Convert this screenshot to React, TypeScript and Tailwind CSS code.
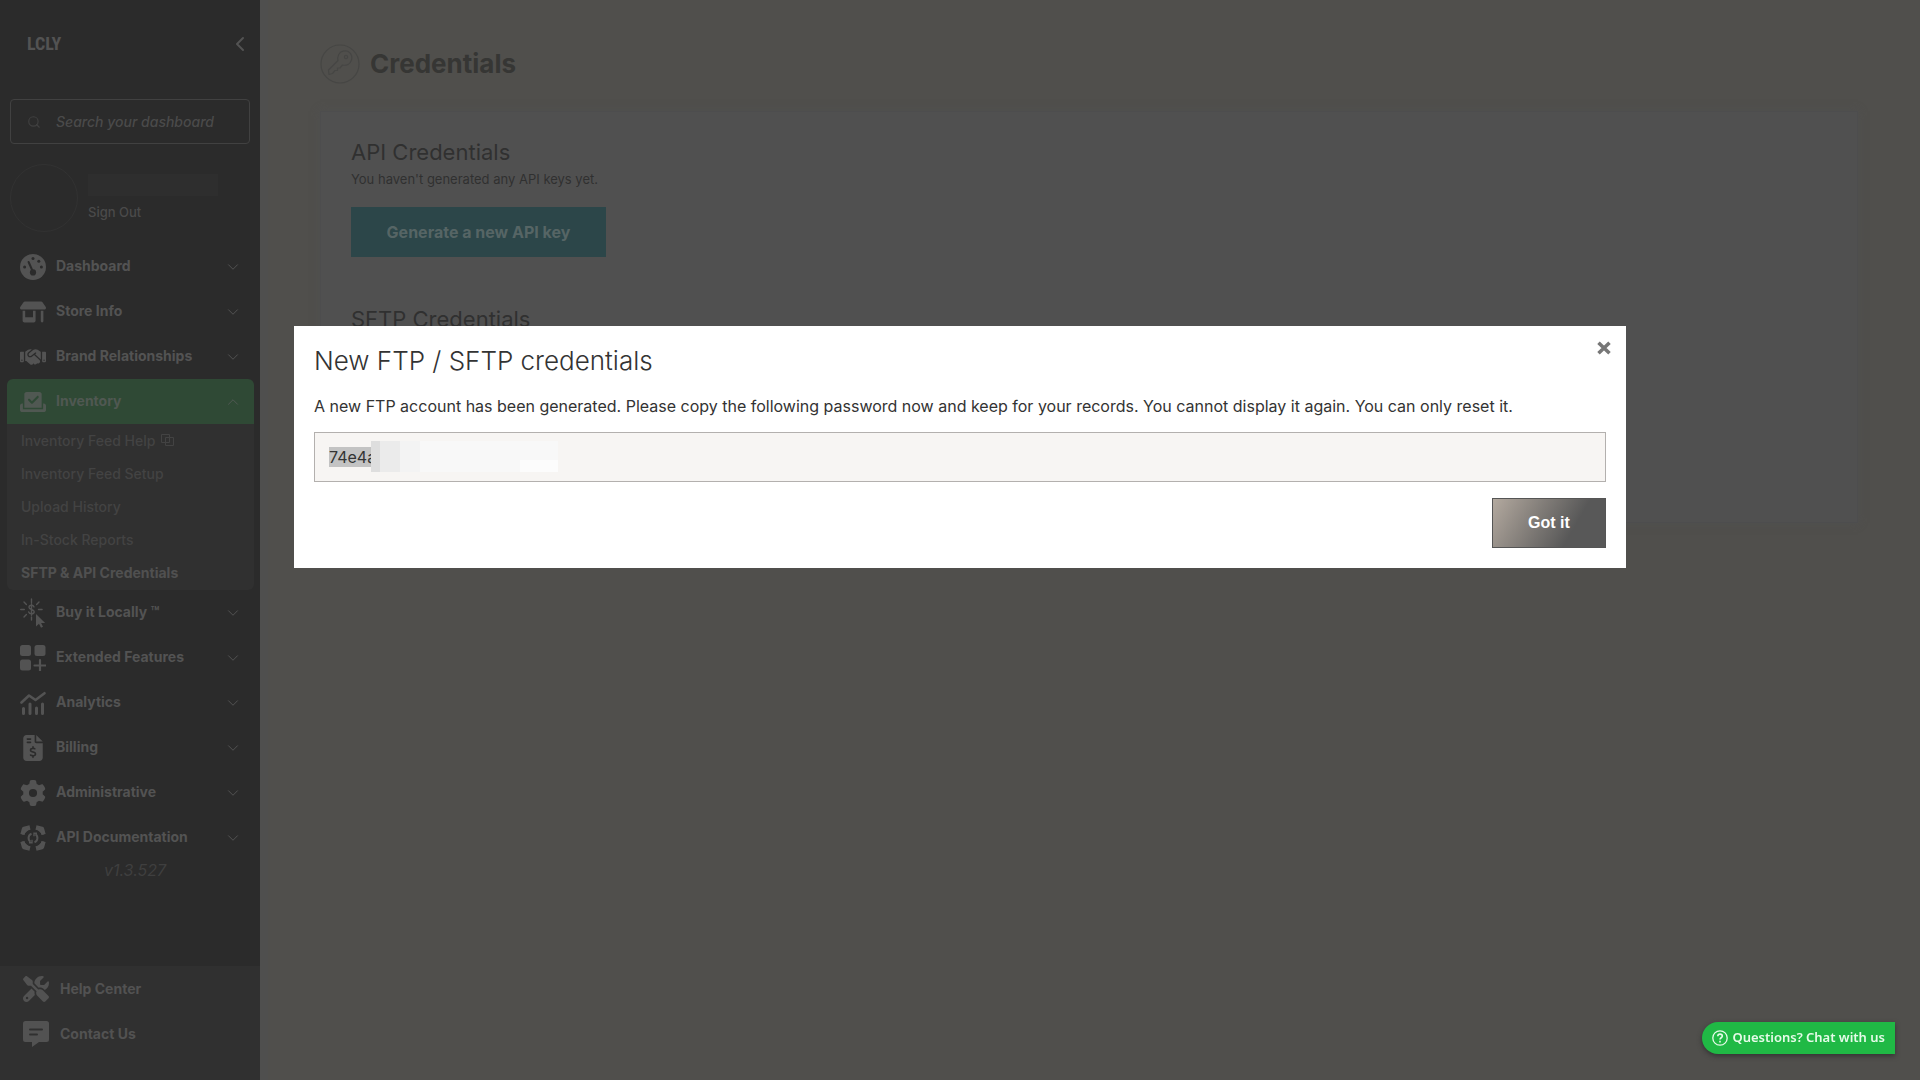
import React from "react";
import {
  FaShop,
  FaHandshake,
  FaCheckToSlot,
  FaFileInvoiceDollar,
  FaGear,
  FaScrewdriverWrench,
} from "react-icons/fa6";
import { ChevronDown, ChevronUp, ChevronLeft, Search } from "lucide-react";

const iconSize = "h-[26px] w-[26px] shrink-0";

function GaugeIcon() {
  return (
    <svg viewBox="0 0 26 26" className={iconSize} fill="currentColor">
      <circle cx="13" cy="13" r="13" />
      <g fill="#2b2b2b">
        <circle cx="13" cy="4.6" r="1.5" />
        <circle cx="18.8" cy="7.2" r="1.5" />
        <circle cx="21.4" cy="13" r="1.5" />
        <circle cx="4.6" cy="13" r="1.5" />
        <circle cx="13" cy="18.4" r="3.1" />
      </g>
      <path d="M8.6 8 13 18" stroke="#2b2b2b" strokeWidth="2" strokeLinecap="round" />
    </svg>
  );
}

function BuyIcon() {
  return (
    <svg viewBox="0 0 26 30" className="h-[30px] w-[26px] shrink-0" fill="none" stroke="currentColor" strokeWidth="1.4" strokeLinecap="round">
      <path d="M11.5 1v3.5M11.5 19v3M0.7 11.5h3.6M18.5 11.5h3.6M4 4l2.4 2.4M19 4l-2.4 2.4M4 19l2.4-2.4" />
      <path d="M14 8.9c-.4-1.1-1.3-1.6-2.5-1.6-1.5 0-2.5.8-2.5 2 0 2.9 5.2 1.4 5.2 4.4 0 1.3-1.1 2.1-2.7 2.1-1.4 0-2.4-.6-2.800-1.800M11.500 5.800v11.400" />
      <path d="M16 16v12.500l3-2.800 2 4 2-1-1.900-3.800h4z" fill="currentColor" stroke="none" />
    </svg>
  );
}

function FeaturesIcon() {
  return (
    <svg viewBox="0 0 26 26" className={iconSize} fill="currentColor">
      <rect x="0" y="0" width="11" height="11" rx="2.5" />
      <rect x="14.5" y="0" width="11" height="11" rx="2.5" />
      <rect x="0" y="14.5" width="11" height="11" rx="2.5" />
      <path d="M20 15v11M14.500 20.500h11" stroke="currentColor" strokeWidth="2.2" strokeLinecap="round" />
    </svg>
  );
}

function AnalyticsIcon() {
  return (
    <svg viewBox="0 0 26 26" className={iconSize} fill="none" stroke="currentColor" strokeLinecap="round">
      <path d="M1.500 12.500 9 5.500l6.500 4.500 9-6.800" strokeWidth="2.6" strokeLinejoin="round" />
      <path d="M3.500 18.500v5M10 14v9.500M16.500 18v5.500M22.500 14v9.500" strokeWidth="3" />
    </svg>
  );
}

function ApiIcon() {
  return (
    <svg viewBox="0 0 26 26" className={iconSize} fill="none" stroke="currentColor">
      <g strokeWidth="4.4" strokeLinejoin="round">
        <path d="M2.500 9.500 4 4l6-1.500M16 2.500 22 4l1.500 5.500M23.500 16.500 22 22l-6 1.500M10 23.500 4 22l-1.500-5.500" />
      </g>
      <path d="M2 9 9 2.500M17 2.500 24 9M24 17l-7 6.500M9 23.500 2 17" strokeWidth="3" />
      <path d="M11.500 8.800A4.500 4.500 0 0 0 10.500 16.700M14.500 17.200A4.500 4.500 0 0 0 15.500 9.300" strokeWidth="2" />
      <path d="M9 17.800h3v-3M17 8.200h-3v3" strokeWidth="1.4" />
    </svg>
  );
}

function ContactIcon() {
  return (
    <svg viewBox="0 0 26 26" className={iconSize}>
      <path d="M2.500 0h21A2.500 2.500 0 0 1 26 2.500v16a2.500 2.500 0 0 1-2.500 2.500H16l-7 5v-5H2.500A2.500 2.500 0 0 1 0 18.500v-16A2.500 2.500 0 0 1 2.500 0z" fill="currentColor" />
      <path d="M7 8.500h12M7 13.500h7" stroke="#303030" strokeWidth="2" strokeLinecap="round" />
    </svg>
  );
}

function CopyIcon() {
  return (
    <svg viewBox="0 0 14 13" className="h-[13px] w-[14px]" fill="none" stroke="currentColor">
      <path d="M4.500 8.500h-4v-8h8v3M4.500 3.500h8v8h-8zM4.500 8.500h4v-5" />
    </svg>
  );
}

function KeyIcon() {
  return (
    <svg viewBox="0 0 40 40" className="size-10 shrink-0 text-[#464644]" fill="none" stroke="currentColor" strokeWidth="1.2" strokeLinejoin="round">
      <circle cx="20" cy="20" r="19" />
      <path d="M9 30.500 8.500 26 18 16.500c-1-4 1-8.500 5-9.300 2.500-.5 5-.2 6.500 1.300 2 2 2.800 5 2 7.500-1.300 4-5 6-9 5L20 24h-2.500v2.500H15L12.500 29.500z" />
      <circle cx="26" cy="13" r="1.6" />
    </svg>
  );
}

const before = [
  { label: "Dashboard", icon: <GaugeIcon /> },
  { label: "Store Info", icon: <FaShop className={iconSize} /> },
  { label: "Brand Relationships", icon: <FaHandshake className={iconSize} /> },
];

const after = [
  { label: "Buy it Locally ™", icon: <BuyIcon /> },
  { label: "Extended Features", icon: <FeaturesIcon /> },
  { label: "Analytics", icon: <AnalyticsIcon /> },
  { label: "Billing", icon: <FaFileInvoiceDollar className={iconSize} /> },
  { label: "Administrative", icon: <FaGear className={iconSize} /> },
  { label: "API Documentation", icon: <ApiIcon /> },
];

const submenu = ["Inventory Feed Help", "Inventory Feed Setup", "Upload History", "In-Stock Reports", "SFTP & API Credentials"];

function NavRow({ label, icon, open = false }: { label: string; icon: React.ReactNode; open?: boolean }) {
  return (
    <button
      type="button"
      aria-expanded={open}
      className={`flex h-[45px] w-full items-center pl-[13px] pr-3 text-left text-sm font-bold ${
        open ? "rounded-t-md bg-[#2f4935] text-[#505852]" : "text-[#535353]"
      }`}
    >
      {icon}
      <span className="ml-2.5 flex-1 pb-px">{label}</span>
      {open ? <ChevronUp className="size-[18px]" strokeWidth={1.3} /> : <ChevronDown className="size-[18px]" strokeWidth={1.3} />}
    </button>
  );
}

function Sidebar() {
  return (
    <aside className="flex w-[260px] shrink-0 flex-col bg-[#2b2b2b] text-[#535353]">
      <div className="flex h-[99px] items-start justify-between pl-[27px] pr-2 pt-8">
        <span className="font-['Roboto_Condensed','Liberation_Sans_Narrow','Liberation_Sans',sans-serif] text-lg leading-6 font-bold">LCLY</span>
        <button type="button" aria-label="Collapse menu">
          <ChevronLeft className="size-6" />
        </button>
      </div>
      <label className="mx-2.5 flex h-[45px] items-center rounded-sm border border-[#414141] pl-4">
        <Search className="size-3.5 shrink-0 text-[#404040]" />
        <input
          type="search"
          aria-label="Search your dashboard"
          placeholder="Search your dashboard"
          className="ml-[15px] w-full min-w-0 bg-transparent pt-px text-sm font-medium italic outline-none placeholder:text-[#4a4a4a]"
        />
      </label>
      <div className="mt-5 flex items-center px-2.5">
        <div className="size-[68px] rounded-full border border-[#323232]" />
        <div className="ml-2.5">
          <div className="h-[22px] w-[130px] bg-[#2e2e2e]" />
          <a href="#" className="mt-1.5 block text-[13px] leading-5 font-medium text-[#4a4a4a]">Sign Out</a>
        </div>
      </div>
      <nav className="mt-3 pr-1.5 pl-[7px]">
        {before.map((item) => (
          <NavRow key={item.label} {...item} />
        ))}
        <NavRow label="Inventory" icon={<FaCheckToSlot className={iconSize} />} open />
        <ul className="rounded-b-md bg-[#303030] px-3.5 pb-px text-sm font-medium text-[#434343]">
          {submenu.map((label, i) => (
            <li key={label}>
              <a href="#" className={`flex h-[33px] items-center gap-1.5 ${i === 4 ? "font-bold text-[#505050]" : ""}`}>
                {label}
                {i === 0 && <CopyIcon />}
              </a>
            </li>
          ))}
        </ul>
        {after.map((item) => (
          <NavRow key={item.label} {...item} />
        ))}
      </nav>
      <p className="ml-2.5 text-center text-base leading-5 italic text-[#3f3f3f]">v1.3.527</p>
      <div className="mt-auto bg-[#303030] pl-[23px] pb-6 text-sm font-bold text-[#525252]">
        <a href="#" className="flex h-[45px] items-center gap-[11px]">
          <FaScrewdriverWrench className={iconSize} />
          Help Center
        </a>
        <a href="#" className="flex h-[45px] items-center gap-[11px]">
          <ContactIcon />
          Contact Us
        </a>
      </div>
    </aside>
  );
}

function Dialog() {
  return (
    <div className="fixed inset-0 flex items-start justify-center pt-[326px]">
      <section role="dialog" aria-modal="true" aria-labelledby="dialog-title" className="relative w-full max-w-[1332px] bg-white p-5 text-[#333333]">
        <button type="button" aria-label="Close" className="absolute right-[15px] top-[15px] text-[#777777]">
          <svg viewBox="0 0 14 14" className="size-3.5" stroke="currentColor" strokeWidth="3.6">
            <path d="M1.500 1.800 12.500 12.200M12.500 1.800 1.500 12.200" />
          </svg>
        </button>
        <h2 id="dialog-title" className="text-[26px] leading-[30px] font-light">New FTP / SFTP credentials</h2>
        <p className="mt-[18px] text-base leading-6">
          A new FTP account has been generated. Please copy the following password now and keep for your records. You cannot display it again. You can only reset it.
        </p>
        <div className="relative mt-3.5 flex h-[50px] items-center border border-[#b3b0ae] bg-[#f7f5f3]">
          <span className="absolute left-3.5 top-3.5 h-5 w-[42px] bg-[#c3c3c3]" />
          <input readOnly aria-label="Password" value="74e4a" className="relative w-full bg-transparent px-3.5 text-base outline-none" />
          <div className="absolute left-14 top-2 flex h-[31px] w-[187px] bg-[#f8f8f8]">
            <span className="w-[9px] bg-[#dedede]" />
            <span className="w-5 bg-[#ebebeb]" />
            <span className="w-5 bg-[#f3f3f3]" />
            <span className="ml-auto h-3 w-[38px] self-end bg-[#fcfcfc]" />
          </div>
        </div>
        <div className="mt-4 flex justify-end">
          <button
            type="button"
            className="h-[50px] w-[114px] border border-[#555555] bg-[linear-gradient(120deg,#b3a99f_0%,#585858_70%)] font-['Liberation_Sans',Arial,sans-serif] text-base font-bold text-white"
          >
            Got it
          </button>
        </div>
      </section>
    </div>
  );
}

export default function App() {
  return (
    <div className="flex min-h-screen bg-[#504f4c] font-['Inter',sans-serif]">
      <Sidebar />
      <main className="min-w-0 flex-1 border-l-8 border-[#4f4f4e] pl-[52px] pr-[62px] pt-11">
        <header className="flex items-center gap-2.5">
          <KeyIcon />
          <h1 className="text-[26px] leading-10 font-bold text-[#363634]">Credentials</h1>
        </header>
        <div className="mt-[27px] h-[412px] border border-[#4d4d4e] bg-[#505050] px-[30px] pt-6 text-[#303030] shadow-[0_0_8px_#505050]">
          <h2 className="text-[22px] leading-8">API Credentials</h2>
          <p className="mt-px text-[13px] leading-5">You haven't generated any API keys yet.</p>
          <button type="button" className="mt-[18px] h-[50px] w-[255px] bg-[#2c4649] text-base font-bold text-[#566565]">
            Generate a new API key
          </button>
          <h2 className="mt-[46px] text-[22px] leading-8">SFTP Credentials</h2>
        </div>
      </main>
      <Dialog />
      <button
        type="button"
        className="fixed right-[25px] bottom-[26px] flex h-8 items-center gap-1 rounded-l-full rounded-br-2xl bg-[#20b945] pl-2.5 pr-2.5 font-['Noto_Sans',sans-serif] text-[13px] font-semibold text-[#e6fbe9] shadow-[0_2px_5px_#333333]"
      >
        <svg viewBox="0 0 16 16" className="size-4" fill="none" stroke="currentColor" strokeWidth="1.3">
          <circle cx="8" cy="8" r="7.2" />
          <path d="M5.800 6.300c0-1.300.9-2.200 2.200-2.200s2.300.8 2.300 2c0 1.600-2.300 1.700-2.300 3.400M8 10.800v1.600" strokeWidth="1.6" />
        </svg>
        Questions? Chat with us
      </button>
    </div>
  );
}
